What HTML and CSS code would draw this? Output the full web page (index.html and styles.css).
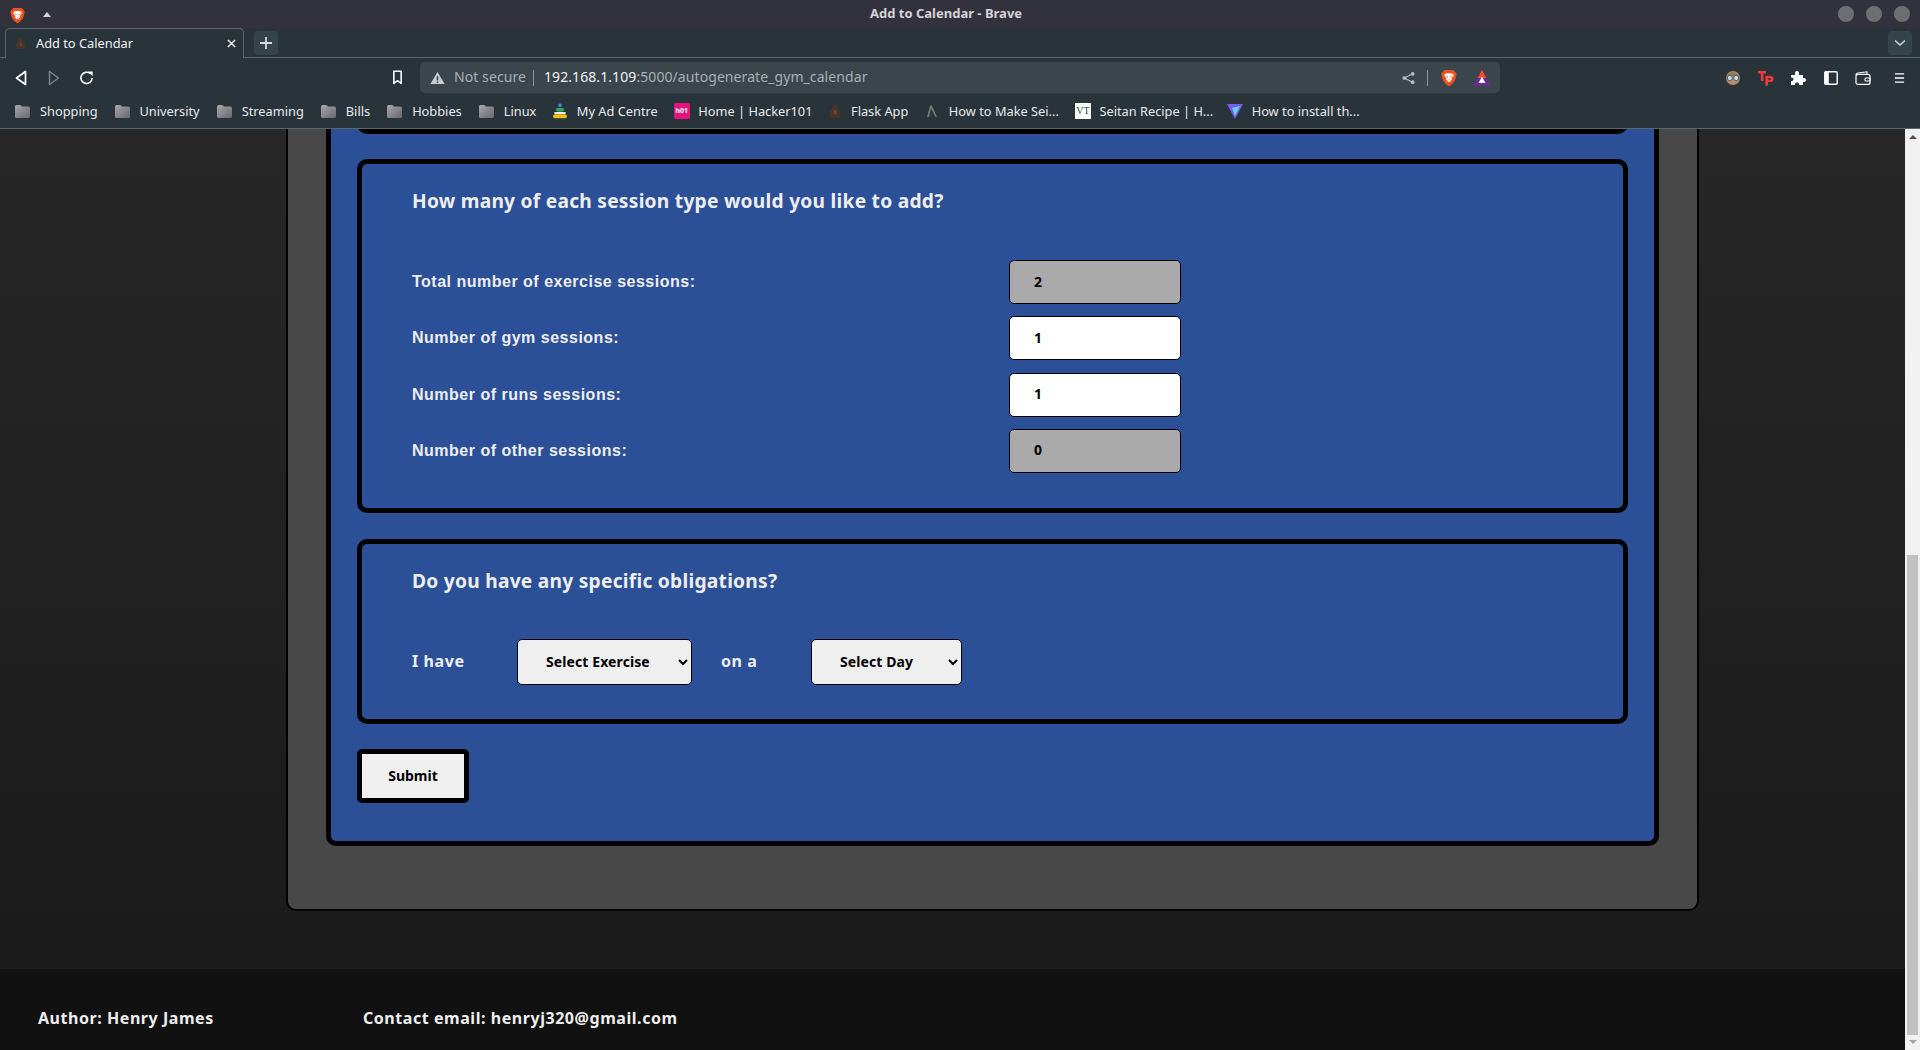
FILE: index.html
```html
<!DOCTYPE html>
<html lang="en">

<head>
    <meta charset="UTF-8">
    <meta name="viewport" content="width=device-width, initial-scale=1.0">
    <title>Add to Calendar</title>
    <link rel="stylesheet" href="styles.css">
</head>

<body>
    <svg class="defs" width="0" height="0">
        <defs>
            <linearGradient id="folder-fill" x1="0" y1="0" x2="1" y2="1">
                <stop offset="0" stop-color="#a9a9ad" />
                <stop offset="1" stop-color="#66666b" />
            </linearGradient>
            <symbol id="folder" viewBox="0 0 17 16">
                <path d="M1 3.5 Q1 2 2.5 2 H6.5 L8 3.5 H14.5 Q16 3.5 16 5 V13.5 Q16 15 14.5 15 H2.5 Q1 15 1 13.5 Z" fill="url(#folder-fill)" />
            </symbol>
            <symbol id="brave" viewBox="0 0 16 18">
                <path d="M3.6 1 H12.4 L14.4 3.2 L15.6 5 L14.6 9.5 Q13.8 12.8 11.6 14.6 L8 17.4 L4.4 14.6 Q2.2 12.8 1.4 9.5 L0.4 5 L1.6 3.2 Z" fill="#f1521f" />
                <path d="M4 5 L6.4 4.2 H9.6 L12 5 L12.6 6.6 L10.4 9.4 L10.8 10.6 L9 12.8 H7 L5.2 10.6 L5.6 9.4 L3.4 6.6 Z" fill="#fff" />
                <path d="M5.4 7 L7 7.6 L6.8 8.4 L5.8 8.2 Z M10.6 7 L9 7.6 L9.2 8.4 L10.2 8.2 Z M7.2 10.6 H8.8 L8 11.6 Z" fill="#f1521f" />
            </symbol>
            <symbol id="fav-flask" viewBox="0 0 12 14">
                <path d="M5 1 H7 L8 4 L11 8 L10 13 H2 L1 8 L4 4 Z" fill="#4a3428" />
                <path d="M5 6 H7 L8 10 H5 Z" fill="#6a4630" />
            </symbol>
        </defs>
    </svg>

    <header class="browser">
        <div class="titlebar">
            <div class="titlebar-left">
                <svg class="brave-logo"><use href="#brave" /></svg>
                <span class="title-caret"></span>
            </div>
            <span class="window-title">Add to Calendar - Brave</span>
            <div class="window-buttons">
                <span class="window-dot"></span>
                <span class="window-dot"></span>
                <span class="window-dot"></span>
            </div>
        </div>

        <div class="tabstrip">
            <div class="tab">
                <svg class="tab-favicon"><use href="#fav-flask" /></svg>
                <span class="tab-title">Add to Calendar</span>
                <svg class="tab-close" viewBox="0 0 10 10">
                    <path d="M1 1 L9 9 M9 1 L1 9" stroke="#fff" stroke-width="1.6" />
                </svg>
            </div>
            <div class="new-tab">
                <svg viewBox="0 0 14 14" width="14" height="14">
                    <path d="M7 1 V13 M1 7 H13" stroke="#d5d9db" stroke-width="1.8" />
                </svg>
            </div>
            <div class="tab-list">
                <svg viewBox="0 0 12 8" width="12" height="8">
                    <path d="M1 1.5 L6 6 L11 1.5" fill="none" stroke="#cfd4d6" stroke-width="1.6" />
                </svg>
            </div>
        </div>

        <div class="toolbar">
            <div class="nav-buttons">
                <svg viewBox="0 0 12 16" width="12" height="16">
                    <path d="M10.5 1.5 V14.5 L1.5 8 Z" fill="none" stroke="#fff" stroke-width="1.7" stroke-linejoin="round" />
                </svg>
                <svg viewBox="0 0 12 16" width="12" height="16">
                    <path d="M1.5 1.5 V14.5 L10.5 8 Z" fill="none" stroke="#7d8588" stroke-width="1.5" stroke-linejoin="round" />
                </svg>
                <svg viewBox="0 0 16 16" width="15" height="16">
                    <path d="M11.8 3.2 A6 6 0 1 0 14 8" fill="none" stroke="#fff" stroke-width="1.7" />
                    <path d="M9.5 1 H14.5 V6 Z" fill="#fff" />
                </svg>
            </div>
            <svg class="bookmark-icon" viewBox="0 0 12 16" width="11" height="15">
                <path d="M2 1.2 H10 V14.5 L6 11.5 L2 14.5 Z" fill="none" stroke="#fff" stroke-width="1.7" stroke-linejoin="round" />
            </svg>
            <div class="urlbar">
                <svg viewBox="0 0 16 14" width="15" height="14">
                    <path d="M8 .5 L15.6 13.5 H.4 Z" fill="#c9cdcf" />
                    <path d="M7.2 5 H8.8 V9.6 H7.2 Z M7.2 10.6 H8.8 V12.2 H7.2 Z" fill="#3a464c" />
                </svg>
                <span class="not-secure">Not secure</span>
                <span class="url-sep"></span>
                <span class="url"><span class="url-host">192.168.1.109</span>:5000/autogenerate_gym_calendar</span>
                <svg class="share-icon" viewBox="0 0 14 14" width="13" height="14">
                    <circle cx="11.5" cy="2.5" r="2" fill="#b9bec0" />
                    <circle cx="2.5" cy="7" r="2" fill="#b9bec0" />
                    <circle cx="11.5" cy="11.5" r="2" fill="#b9bec0" />
                    <path d="M11.5 2.5 L2.5 7 L11.5 11.5" fill="none" stroke="#b9bec0" stroke-width="1.2" />
                </svg>
                <span class="url-sep url-sep-right"></span>
                <svg class="shield-icon"><use href="#brave" /></svg>
                <svg class="bat-icon" viewBox="0 0 18 16" width="18" height="16">
                    <path d="M9 0 L18 16 H0 Z" fill="#662d91" />
                    <path d="M9 0 L13.5 8 H4.5 L0 16 Z" fill="#ff4724" />
                    <path d="M9 6.5 L12.4 13 H5.6 Z" fill="#fff" />
                </svg>
            </div>
            <div class="extensions">
                <svg viewBox="0 0 16 16" width="16" height="16">
                    <circle cx="8" cy="8" r="7" fill="#b98a6a" />
                    <path d="M1.5 6 Q8 -2 14.5 6 Z" fill="#8d7a55" />
                    <circle cx="4.8" cy="8" r="2.6" fill="#bfe0ea" stroke="#4a5a62" />
                    <circle cx="11.2" cy="8" r="2.6" fill="#bfe0ea" stroke="#4a5a62" />
                </svg>
                <svg viewBox="0 0 16 16" width="16" height="16">
                    <path d="M0 1 H8 V3.6 H5.4 V11 H2.8 V3.6 H0 Z" fill="#ee3a3a" />
                    <path d="M7.4 6 H12.5 Q15.6 6 15.6 9 Q15.6 12 12.5 12 H10 V15.5 H7.4 Z M10 8.2 V9.8 H12.2 Q13 9.8 13 9 Q13 8.2 12.2 8.2 Z" fill="#ee3a3a" fill-rule="evenodd" />
                </svg>
                <svg viewBox="0 0 16 16" width="16" height="16">
                    <path d="M1 5 H5 Q4.5 1 7 1 Q9.5 1 9 5 H13 V8 Q16 7.5 16 10 Q16 12.5 13 12 V15 H9 Q9.5 12.5 7 12.5 Q4.5 12.5 5 15 H1 V11 Q3.5 11.5 3.5 9 Q3.5 7 1 7.5 Z" fill="#fff" />
                </svg>
                <svg viewBox="0 0 14 14" width="14" height="14">
                    <rect x=".8" y=".8" width="12.4" height="12.4" rx="1" fill="none" stroke="#fff" stroke-width="1.4" />
                    <rect x=".8" y=".8" width="4" height="12.4" fill="#fff" />
                </svg>
                <svg viewBox="0 0 16 14" width="16" height="14">
                    <path d="M1 4 Q1 2 3 2 L12 .8 V3" fill="none" stroke="#fff" stroke-width="1.1" />
                    <rect x="1" y="3.4" width="14" height="10" rx="2" fill="none" stroke="#fff" stroke-width="1.2" />
                    <rect x="10" y="7" width="5" height="3" rx="1" fill="none" stroke="#fff" stroke-width="1.1" />
                </svg>
                <svg viewBox="0 0 12 12" width="11" height="12">
                    <path d="M1 1.5 H11 M1 6 H11 M1 10.5 H11" stroke="#fff" stroke-width="1.4" />
                </svg>
            </div>
        </div>

        <nav class="bookmarks">
            <a class="bookmark"><svg class="bm-icon"><use href="#folder" /></svg>Shopping</a>
            <a class="bookmark"><svg class="bm-icon"><use href="#folder" /></svg>University</a>
            <a class="bookmark"><svg class="bm-icon"><use href="#folder" /></svg>Streaming</a>
            <a class="bookmark"><svg class="bm-icon"><use href="#folder" /></svg>Bills</a>
            <a class="bookmark"><svg class="bm-icon"><use href="#folder" /></svg>Hobbies</a>
            <a class="bookmark"><svg class="bm-icon"><use href="#folder" /></svg>Linux</a>
            <a class="bookmark site">
                <svg class="bm-icon" viewBox="0 0 16 16">
                    <circle cx="8" cy="2.4" r="1.8" fill="#4285f4" />
                    <rect x="4" y="5" width="8" height="3.4" rx="1.6" fill="#34a853" />
                    <rect x="2.4" y="9" width="11.2" height="2.4" fill="#e8eaed" />
                    <rect x="1" y="11.6" width="14" height="3.6" rx="1.8" fill="#fbbc04" />
                </svg>My Ad Centre</a>
            <a class="bookmark site">
                <span class="hack-icon">h01</span>Home | Hacker101</a>
            <a class="bookmark site flask-link"><svg class="bm-icon"><use href="#fav-flask" /></svg>Flask App</a>
            <a class="bookmark site">
                <svg class="bm-icon" viewBox="0 0 16 16">
                    <path d="M3 14 L6 3 Q7 1.5 8 3 L13 14 L11.5 14 L7 5.5 L5 14 Z" fill="#6f7f6c" />
                </svg>How to Make Sei...</a>
            <a class="bookmark site">
                <span class="vt-icon">VT</span>Seitan Recipe | H...</a>
            <a class="bookmark site">
                <svg class="bm-icon" viewBox="0 0 16 16">
                    <path d="M0 1 L16 1 L8 16 Z" fill="#7a5cf0" />
                    <path d="M5 5 L13 3 L8 13 Z" fill="#5fd3ea" />
                </svg>How to install th...</a>
        </nav>
    </header>

    <div class="viewport">
        <div class="page">
            <main class="content">
                <div class="card">
                    <form class="panel">
                        <div class="section section-cut"></div>

                        <section class="section">
                            <h2>How many of each session type would you like to add?</h2>
                            <div class="rows">
                                <div class="row">
                                    <label for="total">Total number of exercise sessions:</label>
                                    <input class="count locked" type="text" id="total" value="2" readonly>
                                </div>
                                <div class="row">
                                    <label for="gym">Number of gym sessions:</label>
                                    <input class="count" type="text" id="gym" value="1">
                                </div>
                                <div class="row">
                                    <label for="runs">Number of runs sessions:</label>
                                    <input class="count" type="text" id="runs" value="1">
                                </div>
                                <div class="row">
                                    <label for="other">Number of other sessions:</label>
                                    <input class="count locked" type="text" id="other" value="0" readonly>
                                </div>
                            </div>
                        </section>

                        <section class="section">
                            <h2>Do you have any specific obligations?</h2>
                            <div class="obligation">
                                <span class="word word-have">I have</span>
                                <select class="pick pick-exercise">
                                    <option>Select Exercise</option>
                                </select>
                                <span class="word word-on">on a</span>
                                <select class="pick pick-day">
                                    <option>Select Day</option>
                                </select>
                            </div>
                        </section>

                        <button class="submit" type="button">Submit</button>
                    </form>
                </div>
            </main>

            <footer class="footer">
                <span class="author">Author: Henry James</span>
                <span>Contact email: henryj320@gmail.com</span>
            </footer>
        </div>

        <div class="scrollbar">
            <span class="arrow-up"></span>
            <div class="track">
                <div class="thumb"></div>
            </div>
            <span class="arrow-down"></span>
        </div>
    </div>
</body>

</html>
```

FILE: styles.css
```css
* {
    box-sizing: border-box;
}

body {
    margin: 0;
    height: 100vh;
    display: flex;
    flex-direction: column;
    overflow: hidden;
    font-family: "Noto Sans", sans-serif;
    background-color: #111;
}

.defs {
    display: block;
    height: 0;
}

/* browser window */

.browser {
    flex: none;
    color: #e8eaeb;
    font-size: 12.8px;
    background-color: #29333a;
}

.titlebar {
    height: 28px;
    display: flex;
    align-items: center;
    background-color: #32323c;
}

.titlebar-left {
    width: 200px;
    display: flex;
    align-items: center;
    gap: 18px;
    padding-left: 10px;
}

.brave-logo {
    width: 15px;
    height: 17px;
    margin-top: 2px;
}

.title-caret {
    width: 0;
    height: 0;
    border-left: 4px solid transparent;
    border-right: 4px solid transparent;
    border-bottom: 5px solid #d6d6d6;
}

.window-title {
    margin-left: 670px;
    margin-bottom: 2px;
    font-size: 13px;
    font-weight: 700;
    color: #d4d4d6;
}

.window-buttons {
    margin-left: auto;
    display: flex;
    gap: 12px;
    padding-right: 10px;
}

.window-dot {
    width: 16px;
    height: 16px;
    border-radius: 50%;
    background-color: #6e6e73;
}

.tabstrip {
    height: 30px;
    display: flex;
    align-items: flex-end;
    padding-left: 5px;
    border-bottom: 1px solid #5c666b;
}

.tab {
    width: 239px;
    height: 30px;
    margin-bottom: -1px;
    display: flex;
    align-items: center;
    padding: 0 7px 0 9px;
    border: 1px solid #5c666b;
    border-bottom: none;
    border-radius: 5px 5px 0 0;
    background-color: #29333a;
}

.tab-favicon {
    width: 11px;
    height: 13px;
}

.tab-title {
    flex: 1;
    margin-left: 10px;
    margin-bottom: 1px;
    color: #f0f2f3;
}

.tab-close {
    width: 9px;
    height: 9px;
}

.new-tab,
.tab-list {
    width: 24px;
    height: 24px;
    margin-bottom: 2px;
    display: flex;
    align-items: center;
    justify-content: center;
    border-radius: 4px;
    background-color: #35434b;
}

.new-tab {
    margin-left: 10px;
}

.tab-list {
    margin-left: auto;
    margin-right: 8px;
}

.toolbar {
    height: 40px;
    display: flex;
    align-items: center;
    padding-left: 15px;
    padding-bottom: 1px;
}

.nav-buttons {
    width: 109px;
    display: flex;
    align-items: center;
    gap: 21px;
}

.nav-buttons svg:last-child {
    margin-left: -2px;
}

.bookmark-icon {
    margin-left: 268px;
}

.urlbar {
    width: 1080px;
    height: 31px;
    margin-left: 17px;
    display: flex;
    align-items: center;
    padding: 0 9px 0 10px;
    border-radius: 5px;
    font-size: 14px;
    background-color: #3a464c;
}

.not-secure {
    margin-left: 9px;
    padding-bottom: 2px;
    letter-spacing: 0.08px;
    color: #a9afb2;
}

.url-sep {
    width: 1px;
    height: 16px;
    margin: 0 10px 0 7px;
    background-color: #8b9498;
}

.url {
    padding-bottom: 2px;
    letter-spacing: 0.08px;
    color: #a9afb2;
}

.url-host {
    color: #f0f2f3;
}

.share-icon {
    margin-left: auto;
}

.url-sep-right {
    margin: 0 13px 0 12px;
}

.shield-icon {
    width: 16px;
    height: 18px;
}

.bat-icon {
    margin-left: 16px;
}

.extensions {
    margin-left: 225px;
    display: flex;
    align-items: center;
    gap: 16.5px;
}

.extensions svg:nth-child(4),
.extensions svg:nth-child(5) {
    margin-left: 1px;
}

.extensions svg:last-child {
    margin-left: 6px;
}

.bookmarks {
    height: 31px;
    display: flex;
    align-items: center;
    gap: 16px;
    padding-left: 14px;
    padding-bottom: 4px;
    border-bottom: 1px solid #5c666b;
}

.bookmark {
    display: flex;
    align-items: center;
    gap: 9px;
    color: #e8eaeb;
    white-space: nowrap;
}

.bm-icon {
    width: 17px;
    height: 16px;
}

.site {
    gap: 8.5px;
}

.site .bm-icon {
    width: 16px;
}

.site:last-child {
    margin-left: -2px;
}

.flask-link {
    margin-left: -2px;
}

.hack-icon {
    width: 16px;
    height: 16px;
    display: block;
    border-radius: 2px;
    font-size: 7px;
    font-weight: 700;
    line-height: 16px;
    text-align: center;
    color: #fff;
    background-color: #e6127e;
}

.vt-icon {
    width: 16px;
    height: 16px;
    display: block;
    font-family: "Liberation Serif", serif;
    font-size: 10px;
    line-height: 16px;
    text-align: center;
    color: #1f4a3a;
    background-color: #fff;
}

/* page */

.viewport {
    flex: 1;
    min-height: 0;
    display: flex;
}

.page {
    flex: 1;
    min-width: 0;
    display: flex;
    flex-direction: column;
}

.content {
    flex: 1;
    min-height: 0;
    overflow: hidden;
    background: linear-gradient(#272727, #1b1b1b);
}

.card {
    width: 1413px;
    margin-left: 286px;
    padding: 0 38px 63px;
    border: 2px solid #000;
    border-top: none;
    border-radius: 0 0 10px 10px;
    background-color: #484848;
}

.panel {
    padding: 0 26px 38px;
    border: 5px solid #000;
    border-top: none;
    border-radius: 0 0 10px 10px;
    color: #eee;
    background-color: #2b5097;
}

.section {
    margin-bottom: 26px;
    padding: 0 49px 0 50px;
    border: 5px solid #000;
    border-radius: 10px;
}

/* the section above, scrolled almost out of view */
.section-cut {
    height: 30px;
    margin-top: -25px;
    margin-bottom: 25px;
}

.section h2 {
    margin: 0;
    padding-top: 23px;
    font-size: 19.2px;
    font-weight: 700;
    line-height: 28px;
    letter-spacing: 0.25px;
}

.rows {
    display: flex;
    flex-direction: column;
    gap: 12.3px;
    padding: 45px 0 35px;
}

.row {
    display: flex;
    align-items: center;
}

.row label {
    width: 597px;
    font-family: "Liberation Sans", Arial, sans-serif;
    font-size: 16px;
    font-weight: 700;
    letter-spacing: 0.5px;
}

.count {
    width: 172px;
    height: 44px;
    padding: 0 24px 2px;
    border: 1px solid #000;
    border-radius: 5px;
    font-family: "Noto Sans", sans-serif;
    font-size: 14px;
    font-weight: 700;
    color: #000;
    background-color: #fff;
}

.locked {
    background-color: #aaa;
}

.obligation {
    display: flex;
    align-items: center;
    padding: 44px 0 34px;
}

.word {
    padding-bottom: 2px;
    font-size: 16px;
    font-weight: 700;
    letter-spacing: 0.6px;
}

.word-have {
    width: 105px;
}

.word-on {
    width: 90px;
    margin-left: 29px;
}

.pick {
    height: 46px;
    padding: 0 20px 0 24px;
    border: 1px solid #000;
    border-radius: 5px;
    font-family: "Noto Sans", sans-serif;
    font-size: 14px;
    font-weight: 700;
    letter-spacing: 0.1px;
    color: #000;
    background-color: #efefef;
}

.pick-exercise {
    width: 175px;
}

.pick-day {
    width: 151px;
}

.submit {
    width: 112px;
    height: 54px;
    margin-top: -1px;
    display: block;
    border: 5px solid #000;
    border-radius: 5px;
    font-family: "Noto Sans", sans-serif;
    font-size: 14px;
    font-weight: 700;
    color: #000;
    background-color: #efefef;
}

.footer {
    flex: none;
    height: 81px;
    display: flex;
    align-items: center;
    padding-left: 38px;
    padding-top: 16px;
    font-size: 16px;
    font-weight: 700;
    letter-spacing: 0.55px;
    color: #eee;
    background-color: #111;
}

.author {
    width: 325px;
}

/* scrollbar */

.scrollbar {
    flex: none;
    width: 15px;
    display: flex;
    flex-direction: column;
    align-items: center;
    background-color: #f1f1f1;
}

.arrow-up,
.arrow-down {
    flex: none;
    width: 0;
    height: 0;
    border-left: 4px solid transparent;
    border-right: 4px solid transparent;
}

.arrow-up {
    margin: 6px 0 5px;
    border-bottom: 4px solid #505050;
}

.arrow-down {
    margin: 5px 0 6px;
    border-top: 4px solid #a3a3a3;
}

.track {
    flex: 1;
    width: 100%;
    display: flex;
    flex-direction: column;
    justify-content: flex-end;
    align-items: center;
}

.thumb {
    width: 11px;
    height: 480px;
    background-color: #c1c1c1;
}
```
